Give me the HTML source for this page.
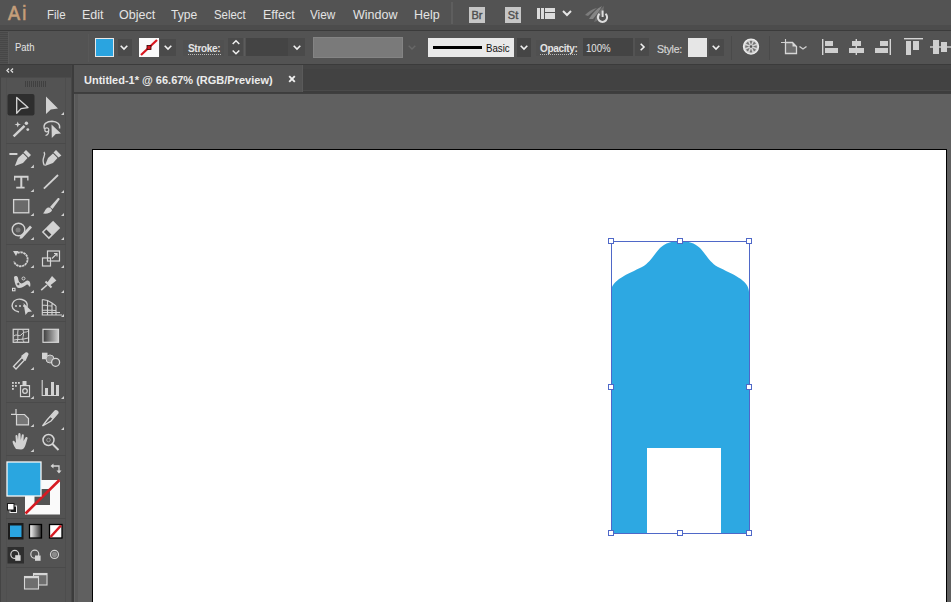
<!DOCTYPE html>
<html><head><meta charset="utf-8">
<style>
*{box-sizing:border-box}
html,body{margin:0;padding:0}
body{width:951px;height:602px;overflow:hidden;position:relative;background:#535353;font-family:"Liberation Sans",sans-serif;color:#e6e6e6}
.a{position:absolute}
.mi{position:absolute;top:8px;font-size:12.5px;color:#e4e4e4;line-height:15px;white-space:nowrap;transform-origin:0 0}
.lbl{position:absolute;font-size:10.5px;color:#e4e4e4;line-height:12px;white-space:nowrap;transform-origin:0 0}
.dd{position:absolute;background:#4a4a4a}
svg{position:absolute;overflow:visible}
</style></head><body>
<!-- MENU BAR -->
<div class="a" style="left:0;top:0;width:951px;height:25px;background:#535353"></div>
<div class="a" style="left:0;top:25px;width:951px;height:5px;background:#4c4c4c"></div>
<div class="a" style="left:0;top:30px;width:951px;height:1px;background:#3b3b3b"></div>
<div class="a" style="left:8px;top:2px;font-size:21px;color:#c9a27e;line-height:22px;transform:scaleX(0.86);transform-origin:0 0;-webkit-text-stroke:0.7px #c09a76;letter-spacing:2.5px">Ai</div>
<div class="mi" style="left:47px;transform:scaleX(0.92)">File</div>
<div class="mi" style="left:82px">Edit</div>
<div class="mi" style="left:119px">Object</div>
<div class="mi" style="left:171px;transform:scaleX(0.97)">Type</div>
<div class="mi" style="left:214px;transform:scaleX(0.91)">Select</div>
<div class="mi" style="left:263px">Effect</div>
<div class="mi" style="left:310px;transform:scaleX(0.94)">View</div>
<div class="mi" style="left:353px">Window</div>
<div class="mi" style="left:414px">Help</div>
<div class="a" style="left:451px;top:2px;width:2px;height:22px;background:#5e5e5e"></div>
<!-- Br / St -->
<div class="a" style="left:469px;top:7px;width:16px;height:16px;background:#c6c6c6;color:#4e4e4e;font-size:11px;line-height:16px;text-align:center;-webkit-text-stroke:0.4px #4e4e4e">Br</div>
<div class="a" style="left:505px;top:7px;width:16px;height:16px;background:#c6c6c6;color:#4e4e4e;font-size:11px;line-height:16px;text-align:center;-webkit-text-stroke:0.4px #4e4e4e">St</div>
<!-- workspace -->
<svg style="left:537px;top:8px" width="18" height="11"><rect x="0" y="0" width="3" height="11" fill="#dcdcdc"/><rect x="4" y="0" width="3" height="11" fill="#dcdcdc"/><rect x="8" y="0" width="10" height="4" fill="#dcdcdc"/><rect x="8" y="5" width="10" height="6" fill="#dcdcdc"/></svg>
<svg style="left:562px;top:10px" width="10" height="6"><path d="M1,1 L5,5 L9,1" stroke="#e6e6e6" stroke-width="2" fill="none"/></svg>
<!-- sync -->
<svg style="left:580px;top:0px" width="30" height="26"><path d="M5,15 C8,12 12,9 17,8 C14,11 11,13 8,16 Z" fill="#7c7c7c"/><path d="M9,19 C12,14 16,9 22,6 C20,10 17,14 13,19 Z" fill="#858585"/><path d="M14,22 C16,16 19,10 24,6 C24,11 21,16 17,21 Z" fill="#6f6f6f"/><path d="M19.5,13.8 A4.6,4.6 0 1 0 25.5,13.8" fill="none" stroke="#dedede" stroke-width="2"/><rect x="21.6" y="10.5" width="2" height="6.5" fill="#dedede"/></svg>

<!-- CONTROL BAR -->
<div class="a" style="left:0;top:31px;width:951px;height:33px;background:#535353"></div>
<div class="a" style="left:0;top:64px;width:951px;height:1px;background:#3b3b3b"></div>
<div class="a" style="left:0;top:32px;width:8px;height:32px;background:repeating-linear-gradient(#474747 0 1px,#505050 1px 2px)"></div>
<div class="lbl" style="left:15px;top:41px;transform:scaleX(0.9)">Path</div>
<div class="a" style="left:8px;top:32px;width:1px;height:32px;background:#5a5a5a"></div>
<div class="a" style="left:88px;top:34px;width:1px;height:28px;background:#585858"></div>
<!-- fill swatch -->
<div class="a" style="left:95px;top:38px;width:19px;height:19px;background:#2aa4e0;border:1px solid #e8e8e8"></div>
<div class="dd" style="left:118px;top:39px;width:14px;height:17px"></div>
<svg style="left:120px;top:45px" width="8" height="5"><path d="M0.7,0.7 L4,4 L7.3,0.7" stroke="#f0f0f0" stroke-width="1.6" fill="none"/></svg>
<!-- stroke swatch -->
<svg style="left:139px;top:38px" width="20" height="19"><rect x="0" y="0" width="20" height="19" fill="#fafafa"/><path d="M2,17 L18,2" stroke="#d8161e" stroke-width="2.2"/><rect x="8" y="7.5" width="4" height="4" fill="#d8161e" stroke="#300" stroke-width="0.8"/></svg>
<div class="dd" style="left:160px;top:39px;width:16px;height:17px"></div>
<svg style="left:164px;top:45px" width="8" height="5"><path d="M0.7,0.7 L4,4 L7.3,0.7" stroke="#f0f0f0" stroke-width="1.6" fill="none"/></svg>
<!-- Stroke: -->
<div class="dd" style="left:183px;top:40px;width:41px;height:16px;background:#505050"></div>
<div class="lbl t" style="left:188px;top:43px;font-weight:bold;font-size:10px;letter-spacing:-0.3px">Stroke:</div>
<div class="a" style="left:188px;top:54px;width:33px;height:1px;background:repeating-linear-gradient(90deg,#bbb 0 1px,transparent 1px 2px)"></div>
<div class="dd" style="left:228px;top:38px;width:15px;height:18px;background:#4a4a4a"></div>
<svg style="left:232px;top:40px" width="8" height="15"><path d="M0.7,4 L4,0.8 L7.3,4" stroke="#f0f0f0" stroke-width="1.5" fill="none"/><path d="M0.7,10.5 L4,13.7 L7.3,10.5" stroke="#f0f0f0" stroke-width="1.5" fill="none"/></svg>
<div class="a" style="left:244px;top:38px;width:1px;height:18px;background:#5c5c5c"></div>
<div class="dd" style="left:246px;top:38px;width:42px;height:18px;background:#444"></div>
<div class="dd" style="left:288px;top:38px;width:17px;height:18px;background:#4a4a4a"></div>
<svg style="left:293px;top:45px" width="8" height="5"><path d="M0.7,0.7 L4,4 L7.3,0.7" stroke="#f0f0f0" stroke-width="1.6" fill="none"/></svg>
<!-- profile -->
<div class="a" style="left:313px;top:37px;width:90px;height:21px;background:#7a7a7a;border:1px solid #848484"></div>
<svg style="left:408px;top:45px" width="8" height="5"><path d="M0.7,0.7 L4,4 L7.3,0.7" stroke="#686868" stroke-width="1.4" fill="none"/></svg>
<!-- brush basic -->
<div class="a" style="left:428px;top:38px;width:86px;height:19px;background:#e9e9e9"></div>
<div class="a" style="left:433px;top:46px;width:49px;height:3px;background:#000"></div>
<div class="lbl t" style="left:486px;top:42px;color:#111;font-size:10.5px;transform:scaleX(0.92)">Basic</div>
<div class="dd" style="left:517px;top:38px;width:14px;height:19px;background:#454545"></div>
<svg style="left:520px;top:45px" width="8" height="5"><path d="M0.7,0.7 L4,4 L7.3,0.7" stroke="#f0f0f0" stroke-width="1.6" fill="none"/></svg>
<!-- Opacity -->
<div class="dd" style="left:536px;top:40px;width:42px;height:16px;background:#505050"></div>
<div class="lbl t" style="left:540px;top:43px;font-weight:bold;font-size:10px;letter-spacing:-0.3px">Opacity:</div>
<div class="a" style="left:540px;top:54px;width:37px;height:1px;background:repeating-linear-gradient(90deg,#bbb 0 1px,transparent 1px 2px)"></div>
<div class="dd" style="left:583px;top:38px;width:50px;height:18px;background:#444"></div>
<div class="lbl t" style="left:586px;top:42px;font-size:10.5px;transform:scaleX(0.92)">100%</div>
<div class="dd" style="left:635px;top:38px;width:14px;height:18px;background:#4a4a4a"></div>
<svg style="left:640px;top:43px" width="5" height="8"><path d="M0.7,0.7 L4,4 L0.7,7.3" stroke="#f0f0f0" stroke-width="1.6" fill="none"/></svg>
<!-- Style -->
<div class="lbl t" style="left:657px;top:43px;font-size:10.5px;letter-spacing:-0.2px;color:#d4d4d4;-webkit-text-stroke:0.2px #d4d4d4">Style:</div>
<div class="a" style="left:688px;top:38px;width:19px;height:19px;background:#e6e6e6"></div>
<div class="dd" style="left:709px;top:39px;width:15px;height:17px;background:#4a4a4a"></div>
<svg style="left:712px;top:45px" width="8" height="5"><path d="M0.7,0.7 L4,4 L7.3,0.7" stroke="#f0f0f0" stroke-width="1.6" fill="none"/></svg>
<div class="a" style="left:731px;top:36px;width:1px;height:24px;background:#4a4a4a"></div>
<!-- globe -->
<svg style="left:742px;top:38px" width="18" height="18"><circle cx="9" cy="8.6" r="7.5" fill="#d4d4d4" stroke="#ececec" stroke-width="1.3"/><path d="M10.27,7.33 L11.94,3.60 A5.8,5.8 0 0 1 14.00,5.66 Z" fill="#757575"/><path d="M10.80,8.60 L14.62,7.15 A5.8,5.8 0 0 1 14.62,10.05 Z" fill="#757575"/><path d="M10.27,9.87 L14.00,11.54 A5.8,5.8 0 0 1 11.94,13.60 Z" fill="#757575"/><path d="M9.00,10.40 L10.45,14.22 A5.8,5.8 0 0 1 7.55,14.22 Z" fill="#757575"/><path d="M7.73,9.87 L6.06,13.60 A5.8,5.8 0 0 1 4.00,11.54 Z" fill="#757575"/><path d="M7.20,8.60 L3.38,10.05 A5.8,5.8 0 0 1 3.38,7.15 Z" fill="#757575"/><path d="M7.73,7.33 L4.00,5.66 A5.8,5.8 0 0 1 6.06,3.60 Z" fill="#757575"/><path d="M9.00,6.80 L7.55,2.98 A5.8,5.8 0 0 1 10.45,2.98 Z" fill="#757575"/><circle cx="9" cy="8.6" r="1.3" fill="#555"/></svg>
<div class="a" style="left:769px;top:36px;width:1px;height:24px;background:#4a4a4a"></div>
<!-- transform icon -->
<svg style="left:780px;top:38px" width="28" height="17"><path d="M5.5,4.5 L5.5,15.5 L16.5,15.5 L16.5,8.5 L12.5,4.5 Z" fill="#6d6d6d" stroke="#d6d6d6" stroke-width="1.3"/><path d="M12.5,4.5 L16.5,8.5 L12.5,8.5 Z" fill="#d6d6d6"/><path d="M1,4.5 L5,4.5 M5.5,1 L5.5,4" stroke="#d0d0d0" stroke-width="1.1"/><path d="M19.5,8.5 L23,11 L26.5,8.5" stroke="#d0d0d0" stroke-width="1.4" fill="none"/></svg>
<!-- align icons -->
<svg style="left:822px;top:39px" width="17" height="16"><rect x="0" y="0" width="1.4" height="16" fill="#d4d4d4"/><rect x="3" y="2" width="8" height="5" fill="#cfcfcf"/><rect x="3" y="9" width="13" height="5" fill="#cfcfcf"/></svg>
<svg style="left:848px;top:39px" width="17" height="16"><rect x="7.6" y="0" width="1.4" height="16" fill="#d4d4d4"/><rect x="4" y="2" width="9" height="5" fill="#cfcfcf"/><rect x="1" y="9" width="15" height="5" fill="#cfcfcf"/></svg>
<svg style="left:874px;top:39px" width="17" height="16"><rect x="15.6" y="0" width="1.4" height="16" fill="#d4d4d4"/><rect x="6" y="2" width="8" height="5" fill="#cfcfcf"/><rect x="1" y="9" width="13" height="5" fill="#cfcfcf"/></svg>
<svg style="left:904px;top:38px" width="19" height="17"><rect x="0" y="0" width="19" height="1.4" fill="#d4d4d4"/><rect x="2" y="3" width="5" height="14" fill="#cfcfcf"/><rect x="9" y="3" width="6" height="9" fill="#cfcfcf"/></svg>
<svg style="left:930px;top:39px" width="21" height="16"><rect x="0" y="7.3" width="21" height="1.4" fill="#d4d4d4"/><rect x="3" y="1" width="6" height="14" fill="#cfcfcf"/><rect x="11" y="3" width="6" height="10" fill="#cfcfcf"/></svg>

<div id="tabbar" class="a" style="left:74px;top:65px;width:877px;height:28px;background:#424242;border-top:4px solid #454545"></div>
<div class="a" style="left:303px;top:90px;width:648px;height:1px;background:#4a4a4a"></div>
<div class="a" style="left:74px;top:91px;width:877px;height:2px;background:#3d3d3d"></div>
<div class="a" style="left:74px;top:65px;width:229px;height:27px;background:#535353;border-right:1px solid #5a5a5a"></div>
<div class="a" style="left:84px;top:74px;font-size:11px;font-weight:bold;color:#ececec;line-height:12px;white-space:nowrap">Untitled-1* @ 66.67% (RGB/Preview)</div>
<svg style="left:288px;top:75px" width="8" height="8"><path d="M1.2,1.2 L6.8,6.8 M6.8,1.2 L1.2,6.8" stroke="#f0f0f0" stroke-width="1.9"/></svg>
<div class="a" style="left:74px;top:93px;width:877px;height:1px;background:#3f3f3f"></div>

<div class="a" style="left:74px;top:94px;width:877px;height:508px;background:#606060"></div>
<div class="a" style="left:74px;top:94px;width:4px;height:508px;background:#595959;border-left:1px solid #636363"></div>
<div class="a" style="left:92px;top:149px;width:855px;height:460px;background:#fff;border:1px solid #000"></div>

<!-- TOOLS -->
<div class="a" style="left:0;top:65px;width:72px;height:537px;background:#535353"></div>
<div class="a" style="left:0;top:65px;width:72px;height:12px;background:#454545"></div>
<div class="a" style="left:71px;top:65px;width:3px;height:537px;background:#3c3c3c;border-left:1px solid #474747"></div>
<div class="a" style="left:0;top:77px;width:1px;height:525px;background:#444"></div>
<div class="a" style="left:65px;top:77px;width:1px;height:525px;background:#4d4d4d"></div>
<div class="a" style="left:6px;top:77px;width:1px;height:525px;background:#4f4f4f"></div>


<svg style="left:0;top:0" width="951" height="602">
<g id="toolbg">
<rect x="7.5" y="94" width="27" height="21.5" rx="2" fill="#2e2e2e"/>
<rect x="1" y="77" width="70" height="1" fill="#4b4b4b"/>
</g>
<!-- header << -->
<path d="M9,68.5 L7,70.5 L9,72.5 M13,68.5 L11,70.5 L13,72.5" stroke="#e0e0e0" stroke-width="1.3" fill="none"/>
<!-- grip -->
<g fill="#404040"><rect x="25" y="81" width="1" height="6"/><rect x="27" y="81" width="1" height="6"/><rect x="29" y="81" width="1" height="6"/><rect x="31" y="81" width="1" height="6"/><rect x="33" y="81" width="1" height="6"/><rect x="35" y="81" width="1" height="6"/><rect x="37" y="81" width="1" height="6"/><rect x="39" y="81" width="1" height="6"/><rect x="41" y="81" width="1" height="6"/><rect x="43" y="81" width="1" height="6"/><rect x="45" y="81" width="1" height="6"/></g>
<g fill="#d2d2d2" stroke="none">
<!-- selection (outline) -->
<path d="M16.7,97.5 L28,107.6 L21,108.6 L16.7,113.3 Z" fill="#2e2e2e" stroke="#d6d6d6" stroke-width="1.3" stroke-linejoin="round"/>
<!-- direct selection -->
<path d="M46,96.5 L58,108.5 L50.8,109.5 L46,114 Z"/>
<path d="M61,115 L64,112 L64,115 Z"/>
<!-- magic wand -->
<path d="M13.6,136.4 L24.5,125.9" stroke="#d2d2d2" stroke-width="2.4"/>
<path d="M17.7,121.5 L18.6,123.8 L21,124.5 L18.6,125.3 L17.7,127.5 L16.9,125.3 L14.5,124.5 L16.9,123.8 Z"/>
<circle cx="26.4" cy="123.2" r="1.7"/><circle cx="27.8" cy="129.6" r="1.4"/>
<!-- lasso -->
<path d="M44.5,129 C42.5,123.5 47.5,121.3 52,121.3 C57,121.5 60.5,124 59.5,128.5" stroke="#d2d2d2" stroke-width="1.4" fill="none"/>
<circle cx="46.8" cy="129.8" r="2" fill="none" stroke="#d2d2d2" stroke-width="1.2"/>
<path d="M48.6,130.5 C48.8,133 48,135 45.5,135.5" stroke="#d2d2d2" stroke-width="1.2" fill="none"/>
<path d="M51.5,124.5 L61,133.5 L55.8,134 L51.8,138 Z"/>
<!-- pen -->
<rect x="9.4" y="153" width="8" height="2"/>
<path d="M14.8,166 L18,158 L23,153.5 L27.5,158 L23,163 Z"/>
<path d="M23.5,152.5 L26,150 L31,155 L28.5,157.5 Z"/>
<path d="M30.6,168 L33.9,164.6 L33.9,168 Z"/>
<!-- curvature pen -->
<path d="M44.5,165.5 C40,158 47,156 44,152" stroke="#d2d2d2" stroke-width="1.3" fill="none"/>
<path d="M44.8,166 L48,158 L53,153.5 L57.5,158 L53,163 Z"/>
<path d="M53.5,152.5 L56,150 L61.4,155.4 L58.5,157.5 Z"/>
<!-- type T -->
<path d="M14,175.8 L28.5,175.8 L28.5,180.5 L27.2,180.5 L27.2,177.8 L22.3,177.8 L22.3,186.7 L24.6,186.7 L24.6,188.5 L16.2,188.5 L16.2,186.7 L20.3,186.7 L20.3,177.8 L15.3,177.8 L15.3,180.5 L14,180.5 Z"/>
<path d="M30.6,192 L33.9,189 L33.9,192 Z"/>
<!-- line -->
<path d="M43.9,188.7 L58,175" stroke="#d2d2d2" stroke-width="1.8"/>
<path d="M61,193 L64,190 L64,193 Z"/>
<!-- rectangle -->
<rect x="13.6" y="199.6" width="15.2" height="13.2" fill="#6a6a6a" stroke="#d6d6d6" stroke-width="1.3"/>
<path d="M30.6,216 L33.9,213 L33.9,216 Z"/>
<!-- paintbrush -->
<path d="M50,207 L57.5,198.5 C58.5,197.5 60,198.5 59.5,199.5 L52.5,209 Z"/>
<path d="M43,213.5 C45,212 45,208.5 48,207.5 C50,207 52,209 52,210.5 C51,213 47,214 43,213.5 Z"/>
<path d="M61,216 L64,213 L64,216 Z"/>
<!-- shaper -->
<circle cx="18.5" cy="229.5" r="6.3" fill="none" stroke="#d2d2d2" stroke-width="1.4"/>
<circle cx="18" cy="230" r="2.5" fill="#7c7c7c"/>
<path d="M20,236.5 L30,225.5 L32,227.5 L22,238.5 L19.5,238.7 Z"/>
<path d="M30.6,240 L33.9,237 L33.9,240 Z"/>
<!-- eraser -->
<path d="M53.1,220.8 L60.2,227.9 L48.9,239.2 L41.8,232.1 Z"/>
<path d="M43.9,232.1 L46.4,229.6 L51.4,234.6 L48.9,237.1 Z" fill="#4a4a4a"/>
<path d="M61,240 L64,237 L64,240 Z"/>
<!-- rotate -->
<path d="M17.5,253 A7,7 0 1 1 14,261.5" stroke="#d2d2d2" stroke-width="1.8" fill="none" stroke-dasharray="2.4 0.6"/>
<path d="M13,251 L18.5,251 L16,256 Z"/>
<path d="M30.6,268 L33.9,265 L33.9,268 Z"/>
<!-- scale -->
<rect x="42.5" y="258" width="8" height="8" fill="none" stroke="#d6d6d6" stroke-width="1.2"/>
<rect x="47.5" y="251" width="12" height="10" fill="none" stroke="#d6d6d6" stroke-width="1.2"/>
<path d="M52,258.5 L57,253.5 M54,253.5 L57,253.5 L57,256.5" stroke="#d6d6d6" stroke-width="1.2" fill="none"/>
<path d="M61,268 L64,265 L64,268 Z"/>
<!-- width -->
<path d="M14,277 C15,275.5 17.5,275.8 18,278 C18.5,281 19.5,283.5 21.5,283.5 C23.5,283.5 25,281 27,280.5 C29.5,280 31,283 30.2,286.5 L29,286.5 C28.6,284.8 27.6,284 26.5,284.8 C24,286.5 22,288 19,288 C16,288 14.5,283 14,277 Z"/>
<circle cx="18.3" cy="284" r="1.7" fill="#5a5a5a" stroke="#d2d2d2" stroke-width="0.9"/>
<circle cx="23.5" cy="278.5" r="1.5" fill="none" stroke="#d2d2d2" stroke-width="1"/>
<rect x="12.5" y="288.3" width="2.5" height="2.5" fill="none" stroke="#e0e0e0" stroke-width="1"/>
<path d="M30.6,293 L33.9,290 L33.9,293 Z"/>
<!-- puppet pin -->
<path d="M47,283 L52,276 L56.4,280.5 L50,285.5 Z"/>
<path d="M45.5,281.5 L51.5,287.5" stroke="#d2d2d2" stroke-width="2"/>
<path d="M41.2,290.2 L47,285" stroke="#d2d2d2" stroke-width="1.6"/>
<path d="M61,293 L64,290 L64,293 Z"/>
<!-- shape builder -->
<path d="M19,312 C13,311 11,307 12.5,303.5 C14,300 18,298.5 22,299.5 C26,300.5 28,303 27,307" stroke="#d2d2d2" stroke-width="1.4" fill="none"/>
<path d="M15,306 L17,306 M19,306 L21,306 M23,306 L25,306" stroke="#d2d2d2" stroke-width="1.3"/>
<path d="M23.5,303 L32,311.5 L28,312 L25.5,315 Z"/>
<path d="M30.6,317 L33.9,314 L33.9,317 Z"/>
<!-- perspective grid -->
<path d="M42.3,299.5 L42.3,315 L62,315 M42.3,299.5 L47.5,300.5 L52,303 L56,306 M42.3,305 L52,306 M42.3,310 L56,310.5 M47.5,300.5 L47.5,315 M52,303 L52,315 M56,306 L56,315 M42.3,312.5 L60,312.5" stroke="#d2d2d2" stroke-width="1.1" fill="none"/>
<path d="M61,317 L64,314 L64,317 Z"/>
<!-- mesh -->
<rect x="13.2" y="329.3" width="15.4" height="13" fill="none" stroke="#d6d6d6" stroke-width="1.2"/>
<path d="M14,336 C17,333 19,338 22,334 C24,331 26,333 28,331 M18,330 C17,334 19,338 17,342 M23,330 C25,335 21,338 24,342 M14,340 C18,339 22,340 28,338" stroke="#d2d2d2" stroke-width="1" fill="none"/>
</g>
<!-- gradient -->
<defs><linearGradient id="gt" x1="0" x2="1"><stop offset="0" stop-color="#3a3a3a"/><stop offset="1" stop-color="#cfcfcf"/></linearGradient>
<linearGradient id="gt2" x1="0" x2="1"><stop offset="0" stop-color="#ffffff"/><stop offset="1" stop-color="#2a2a2a"/></linearGradient></defs>
<rect x="43" y="329.3" width="15.5" height="13" fill="url(#gt)" stroke="#d6d6d6" stroke-width="1.2"/>
<g fill="#d2d2d2" stroke="none">
<!-- eyedropper -->
<path d="M13.5,366.5 L22,357.5 L24.5,360 L16,369 Z" fill="none" stroke="#d6d6d6" stroke-width="1.3"/>
<path d="M21,356 L25.5,352.5 C27,351.5 29,353.5 28.5,354.5 L25.5,361 Z"/>
<path d="M30.6,370 L33.9,367 L33.9,370 Z"/>
<!-- blend -->
<rect x="42" y="352.7" width="5.5" height="6.5"/>
<circle cx="50" cy="359" r="4" fill="#8a8a8a" stroke="#d2d2d2" stroke-width="1"/>
<circle cx="55.6" cy="362.3" r="4" fill="#5a5a5a" stroke="#d6d6d6" stroke-width="1.3"/>
<!-- symbol sprayer -->
<g><rect x="12" y="382" width="1.8" height="1.8"/><rect x="15" y="382" width="1.8" height="1.8"/><rect x="18" y="382" width="1.8" height="1.8"/><rect x="12" y="385" width="1.8" height="1.8"/><rect x="15" y="385" width="1.8" height="1.8"/><rect x="12" y="388" width="1.8" height="1.8"/></g>
<rect x="20.5" y="385.6" width="9" height="11" fill="none" stroke="#d6d6d6" stroke-width="1.2"/>
<circle cx="25" cy="391" r="2.3" fill="none" stroke="#d6d6d6" stroke-width="1.3"/>
<rect x="22.5" y="381" width="4" height="4"/>
<path d="M30.6,399 L33.9,396 L33.9,399 Z"/>
<!-- column graph -->
<path d="M42.2,380 L42.2,395.5 L59,395.5" stroke="#d6d6d6" stroke-width="1.1" fill="none"/>
<rect x="45" y="388" width="3" height="7" /><rect x="51" y="382" width="3" height="13"/><rect x="56" y="385" width="3" height="10"/>
<path d="M61,399 L64,396 L64,399 Z"/>
<!-- artboard -->
<path d="M11,414.3 L16,414.3 M16,409 L16,414" stroke="#d6d6d6" stroke-width="1.2"/>
<path d="M16.5,414.5 L24.5,414.5 L28.5,418.5 L28.5,424.8 L16.5,424.8 Z" fill="#767676" stroke="#d6d6d6" stroke-width="1.2"/>
<path d="M30.6,427 L33.9,424 L33.9,427 Z"/>
<!-- slice -->
<path d="M42.5,426 L47,420 L55,411 C56,410 58.5,411.5 58,413 L51,421 Z" fill="none" stroke="#d6d6d6" stroke-width="1.3"/>
<path d="M50,417 L55,411 C56,410 58.5,411.5 58,413 L53,419 Z"/>
<path d="M61,430 L64,427 L64,430 Z"/>
<!-- hand -->
<path d="M16,449 C14,446 12,442 12.8,441 C13.6,440 15,441.5 16,443 L15.5,436 C15.5,434.5 17.3,434.5 17.5,436 L18,440 L18.3,434 C18.5,432.5 20.3,432.5 20.5,434 L20.8,440 L21.8,435 C22,433.8 23.8,434 23.8,435.3 L23.5,441 L25.5,437.5 C26.3,436.5 28,437.2 27.5,438.5 L25.5,445 C24.5,448 23,449.5 21,449.5 Z"/>
<path d="M30.6,452 L33.9,449 L33.9,452 Z"/>
<!-- zoom -->
<circle cx="48.5" cy="440" r="5.5" fill="none" stroke="#d6d6d6" stroke-width="1.5"/>
<circle cx="48.5" cy="440" r="1.8" fill="none" stroke="#9a9a9a" stroke-width="1"/>
<path d="M52.5,444 L58.5,450" stroke="#d6d6d6" stroke-width="2"/>
</g>
</svg>


<svg style="left:0;top:0" width="951" height="602">
<!-- fill & stroke -->
<rect x="25" y="480" width="35" height="34.5" fill="#fafafa"/>
<rect x="34.5" y="489" width="15.5" height="16" fill="#535353"/>
<path d="M25.5,513.5 L59.5,480" stroke="#d61a22" stroke-width="2.6"/>
<rect x="7" y="462" width="34" height="34" fill="#2aa6e0" stroke="#f6f6f6" stroke-width="1.3"/>
<!-- default icon -->
<rect x="10" y="506" width="6.5" height="6.5" fill="#1a1a1a" stroke="#eee" stroke-width="1"/>
<rect x="7.5" y="503.5" width="6.5" height="6.5" fill="#fff" stroke="#1a1a1a" stroke-width="1"/>
<!-- swap -->
<path d="M52,466 L59,466 L59,471" stroke="#d6d6d6" stroke-width="1.3" fill="none"/>
<path d="M50.5,466 L53.5,463.5 L53.5,468.5 Z M59,473.5 L56.5,470.5 L61.5,470.5 Z" fill="#d6d6d6"/>
<!-- color / gradient / none -->
<rect x="8" y="523" width="15.5" height="16.5" fill="#1b1b1b"/>
<rect x="10" y="525.5" width="11.5" height="11.5" fill="#2aa4e0"/>
<rect x="29.5" y="524.5" width="12" height="13.5" fill="url(#gt2)" stroke="#000" stroke-width="1.3"/>
<rect x="49.5" y="524.5" width="12.5" height="13.5" fill="#fff" stroke="#000" stroke-width="1.3"/>
<path d="M50.5,537 L61,525.5" stroke="#d61a22" stroke-width="2.5"/>
<!-- draw modes -->
<rect x="7.5" y="547" width="16.5" height="16.5" fill="#2e2e2e"/>
<g fill="none" stroke="#d2d2d2" stroke-width="1.2">
<circle cx="14.8" cy="554.4" r="4"/><circle cx="34.8" cy="554.2" r="4"/><circle cx="54.5" cy="554.4" r="4"/>
</g>
<rect x="15.2" y="555.2" width="5.4" height="5.6" fill="#d6d6d6"/>
<rect x="35" y="555.5" width="5.6" height="5.3" fill="#d6d6d6"/>
<circle cx="54.5" cy="554.4" r="2.6" fill="#8a8a8a"/>
<!-- screen mode -->
<rect x="33.5" y="573.5" width="13.5" height="11.5" fill="#6e6e6e" stroke="#d6d6d6" stroke-width="1.1"/>
<rect x="24.5" y="576.5" width="14" height="12.5" fill="#6e6e6e" stroke="#d6d6d6" stroke-width="1.1"/>
<rect x="33.5" y="573" width="13.5" height="2.2" fill="#d6d6d6"/>
<rect x="24.5" y="576" width="14" height="2.2" fill="#d6d6d6"/>
<!-- tool panel separators -->
<g fill="#4a4a4a">
<rect x="6" y="143" width="60" height="1"/>
<rect x="6" y="244" width="60" height="1"/>
<rect x="6" y="321" width="60" height="1"/>
<rect x="6" y="402" width="60" height="1"/>
<rect x="6" y="455" width="60" height="1"/>
<rect x="6" y="518" width="60" height="1"/>
<rect x="6" y="567" width="60" height="1"/>
</g>
</svg>
<!-- ARTWORK -->
<svg style="left:0;top:0" width="951" height="602">
<path d="M611,533.5 L611,292 C611,280 628,274 642,267 C651,262 654,254 660,248 C666,243 671,241 680,241 C689,241 694,243 700,248 C706,254 709,262 718,267 C732,274 749,280 749,292 L749,533.5 L721,533.5 L721,448 L647,448 L647,533.5 Z" fill="#2da8e2"/>
<g fill="none" stroke="#4f68c8" stroke-width="1">
<rect x="611.5" y="241.5" width="138" height="292"/>
</g>
<g fill="#fff" stroke="#4f68c8" stroke-width="1">
<rect x="608.5" y="238.5" width="5" height="5"/><rect x="677.5" y="238.5" width="5" height="5"/><rect x="746.5" y="238.5" width="5" height="5"/>
<rect x="608.5" y="384.5" width="5" height="5"/><rect x="746.5" y="384.5" width="5" height="5"/>
<rect x="608.5" y="530.5" width="5" height="5"/><rect x="677.5" y="530.5" width="5" height="5"/><rect x="746.5" y="530.5" width="5" height="5"/>
</g>
</svg>

</body></html>
